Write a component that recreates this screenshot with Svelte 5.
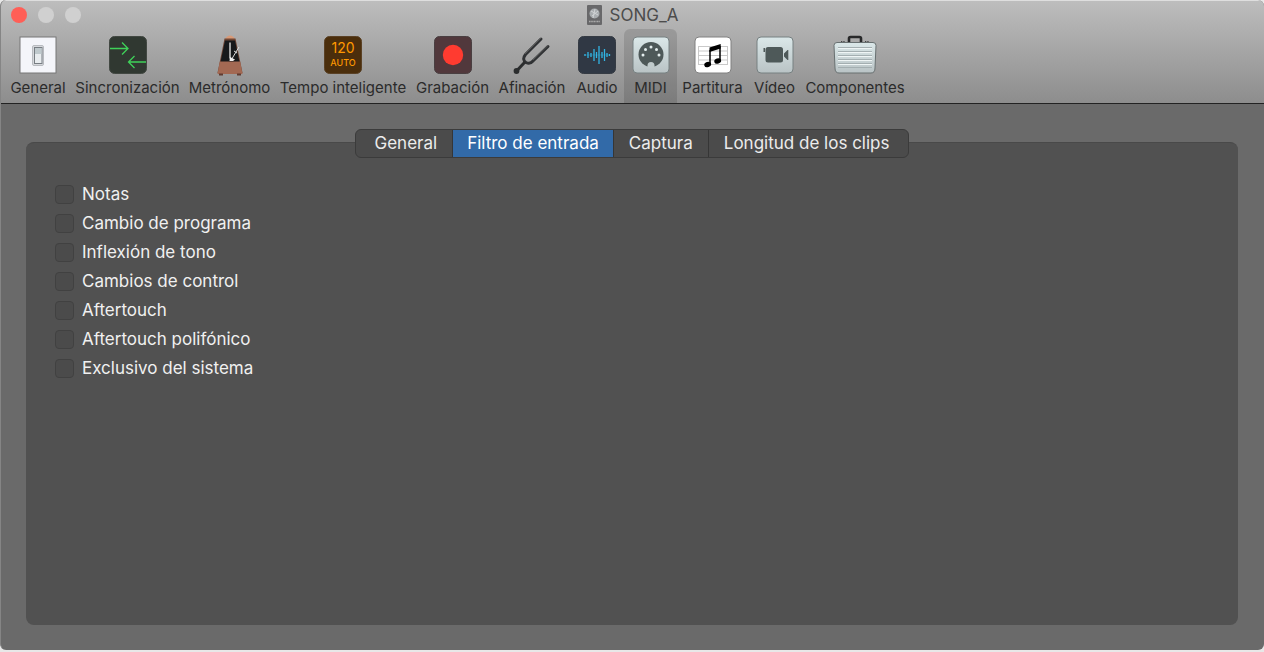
<script>
  const tools = ['General', 'Sincronización', 'Metrónomo', 'Tempo inteligente', 'Grabación', 'Afinación', 'Audio', 'MIDI', 'Partitura', 'Vídeo', 'Componentes'];
  const tabs = ['General', 'Filtro de entrada', 'Captura', 'Longitud de los clips'];
  const filters = ['Notas', 'Cambio de programa', 'Inflexión de tono', 'Cambios de control', 'Aftertouch', 'Aftertouch polifónico', 'Exclusivo del sistema'];
  const wave = [[27, 1], [30, 3], [33, 2], [36, 6], [38.5, 3], [41, 9], [44, 3], [46.5, 6], [49, 2], [51.5, 1]];

  let tool = $state('MIDI');
  let tab = $state('Filtro de entrada');
  let checked = $state(filters.map(() => false));
</script>

<svelte:head><title>SONG_A</title></svelte:head>

<div class="window">
  <header>
    <div class="titlebar">
      <div class="lights">
        <button class="light close" aria-label="Cerrar"></button>
        <button class="light" aria-label="Minimizar" disabled></button>
        <button class="light" aria-label="Ampliar" disabled></button>
      </div>
      <h1>
        <svg width="15" height="20" viewBox="0 0 15 20" aria-hidden="true">
          <rect width="15" height="20" rx="1" fill="#68686a" />
          <circle cx="7.5" cy="8.5" r="5" fill="#a9adb0" />
          <path d="M4 6l7 4M8 4l-2 9M11 6l-6 5" stroke="#d0d3d5" stroke-width="1" />
          <path d="M2 16.5h11" stroke="#aaa" stroke-width="1.6" stroke-dasharray="1.2 .4" />
        </svg>
        <span>SONG_A</span>
      </h1>
    </div>
    <nav class="toolbar" aria-label="Preferencias">
      {#each tools as name}
        <button class="tool" class:active={tool === name} aria-pressed={tool === name} onclick={() => (tool = name)}>
          <svg width="44" height="42" viewBox="0 0 44 42" aria-hidden="true">
            {#if name === 'General'}
              <rect x="4" y="3" width="36" height="36" fill="#f4f5fa" stroke="#777" />
              <rect x="16.5" y="11.500" width="11" height="20" rx="1.500" fill="#d6d8dc" stroke="#b8bbc0" />
              <rect x="18.500" y="13.500" width="7.500" height="16" fill="#e8ecef" stroke="#777d83" />
              <rect x="19" y="14" width="6.500" height="6" fill="#bfc9cd" />
            {:else if name === 'Sincronización'}
              <rect x="3.500" y="2.500" width="37" height="37" rx="5" fill="#303831" stroke="#424842" />
              <path d="M4 14.500h17.500M16 8.500l6 6-6 6M40 28H23M28.500 22l-6 6 6 6" fill="none" stroke="#3fd159" stroke-width="1.300" />
            {:else if name === 'Metrónomo'}
              <path d="M17 5q2-3.500 5-3.500T27 5z" fill="#d99b79" />
              <path d="M16.500 4.500h11L34.500 39h-25z" fill="#6f4635" />
              <path d="M17 6.500h10l4.500 21.500h-19z" fill="#17191b" />
              <path d="M11.800 27.500h20.400L34.500 40h-25z" fill="#a36953" />
              <path d="M11 39.500h4v2h-4zM29 39.500h4v2h-4z" fill="#603b30" />
              <path d="M22 8.500v16" stroke="#a2a2a2" stroke-width="2" />
              <path d="M23.500 25.500L31 13" stroke="#ddd" stroke-width="1" />
              <path d="M26 17l3 2" stroke="#ddd" stroke-width="1" />
              <path d="M22 23l5 2.500-2 1.500h-3.500z" fill="#eee" />
            {:else if name === 'Tempo inteligente'}
              <rect x="3.500" y="2.500" width="37" height="37" rx="5" fill="#4b2e0c" stroke="#5a4125" />
              <text x="22" y="19" text-anchor="middle" font-size="14" fill="#ff9800">120</text>
              <text x="22" y="32" text-anchor="middle" font-size="9" font-weight="500" fill="#ff9800">AUTO</text>
            {:else if name === 'Grabación'}
              <rect x="3.500" y="2.500" width="37" height="37" rx="5" fill="#51383c" stroke="#493f41" />
              <circle cx="22" cy="21" r="10.200" fill="#ff3b30" />
            {:else if name === 'Afinación'}
              <path d="M31 5L15.500 20.500q-4 5 .5 8 4 2 7-1.500L38 12.500" fill="none" stroke="#303234" stroke-width="3" stroke-linecap="round" />
              <path d="M31 4L15 20M38 11.500L23 26" stroke="#666" stroke-width=".7" />
              <path d="M15 28l-8 8.500" stroke="#2b2d2e" stroke-width="3" />
              <circle cx="6.500" cy="37" r="2.900" fill="#2b2d2e" />
            {:else if name === 'Audio'}
              <rect x="3.500" y="2.500" width="37" height="37" rx="5" fill="#303844" stroke="#353b43" />
              <path d="M9.500 21h25.500" stroke="#278eb3" stroke-width=".5" />
              {#each wave as [x, r]}
                <path d={`M${x - 17} ${21 - r}v${r * 2}`} stroke="#32b5e5" stroke-width="1.300" />
              {/each}
            {:else if name === 'MIDI'}
              <rect x="4" y="3" width="36" height="36" rx="4" fill="url(#glass)" stroke="#778081" />
              <circle cx="22" cy="20.500" r="12.500" fill="#4e5959" />
              <path d="M18.500 34v-2.500a3.500 3.500 0 0 1 7 0V34z" fill="#c0cbcc" />
              <g fill="#e4eeee"><circle cx="14" cy="21" r="1.500" /><circle cx="16.500" cy="15.500" r="1.500" /><circle cx="22" cy="13" r="1.500" /><circle cx="27.500" cy="15.500" r="1.500" /><circle cx="30" cy="21" r="1.500" /></g>
            {:else if name === 'Partitura'}
              <rect x="4" y="3" width="36" height="36" rx="4" fill="#fff" stroke="#808080" />
              <path d="M7 12.500h30M7 17h30M7 21.500h30M7 26h30M7 30.500h30M7.500 12.500v18M36.500 12.500v18" stroke="#c9c9c9" fill="none" />
              <path d="M19 16l10-3v14M19 16v14" fill="none" stroke="#000" stroke-width="1.500" />
              <path d="M18.500 13.500L29.700 10v4.500L18.500 18z" fill="#000" />
              <ellipse cx="16.700" cy="30.500" rx="3.500" ry="2.600" transform="rotate(-20 16.700 30.500)" />
              <ellipse cx="26.700" cy="27" rx="3.500" ry="2.600" transform="rotate(-20 26.700 27)" />
            {:else if name === 'Vídeo'}
              <rect x="4" y="3" width="36" height="36" rx="4" fill="url(#glass)" stroke="#778081" />
              <rect x="12.500" y="13" width="17.500" height="15.500" rx="2.500" fill="#4e5959" />
              <path d="M31 19.500l3.500-3.500h.8v10h-.8L31 22.500zM10.500 14h1.500v4h-1.500z" fill="#4e5959" />
            {:else}
              <path d="M16 9V4.500q0-1.500 1.500-1.500h9q1.500 0 1.500 1.500V9" fill="none" stroke="#28292a" stroke-width="2.600" />
              <path d="M8 8h4M32 8h4" stroke="#444" stroke-width="2" stroke-dasharray="1 .7" />
              <path d="M4 8.500h36q3 0 3 3L42 34q0 5-4 5H6q-4 0-4-5L1 11.500q0-3 3-3z" fill="url(#glass)" stroke="#687071" />
              <path d="M5 13.500h34M5 17.500h34M5 21.500h34M5 25.500h34M5 29.500h34M5 33.500h34" stroke="#a4afb1" />
              <path d="M5 14.500h34M5 18.500h34M5 22.500h34M5 26.500h34M5 30.500h34" stroke="#eff5f5" />
            {/if}
          </svg>
          <span>{name}</span>
        </button>
      {/each}
    </nav>
  </header>

  <svg class="defs" width="0" height="0" aria-hidden="true">
    <defs><linearGradient id="glass" x2="0" y2="1"><stop stop-color="#dbe8e9" /><stop offset="1" stop-color="#b9c3c5" /></linearGradient></defs>
  </svg>

  <main>
    <div class="tabs" role="tablist">
      {#each tabs as name}
        <button role="tab" aria-selected={tab === name} onclick={() => (tab = name)}>{name}</button>
      {/each}
    </div>
    <section>
      {#each filters as name, i}
        <label><input type="checkbox" bind:checked={checked[i]} /><span>{name}</span></label>
      {/each}
    </section>
  </main>
</div>

<style>
  :global(body) { margin: 0; background: #e8e8e8; }
  .window {
    box-sizing: border-box;
    display: flex;
    flex-direction: column;
    min-height: calc(100vh - 2px);
    border-left: 1px solid #858585;
    border-radius: 6px;
    overflow: hidden;
    background: #6a6a6a;
    font-family: Inter, "Liberation Sans", sans-serif;
  }
  button { border: 0; padding: 0; margin: 0; background: none; font: inherit; color: inherit; }
  header {
    border-top: 1px solid #dedede;
    border-bottom: 1px solid #222;
    background: linear-gradient(#bdbdbd, #8d8d8d);
  }
  .titlebar { display: grid; grid-template-columns: 1fr auto 1fr; align-items: center; height: 28px; }
  .lights { display: flex; gap: 11px; padding-left: 10px; }
  .light { width: 16px; height: 16px; border-radius: 50%; background: #d0d0d0; }
  .close { background: #ff5f57; }
  h1 { display: flex; align-items: center; gap: 8px; margin: 0; font-size: 17px; line-height: 20px; font-weight: 400; color: #4c4c4c; }
  .toolbar {
    display: grid;
    grid-template-columns: 66px 113px 91px 136px 83px 76px 54px 53px 71px 53px 108px;
    padding-left: 4px;
  }
  .tool {
    display: flex;
    flex-direction: column;
    align-items: center;
    gap: 3px;
    height: 74px;
    padding-top: 5px;
    border-radius: 6px 6px 0 0;
    font-size: 15px;
    line-height: 18px;
    color: #2b2b2b;
    white-space: nowrap;
  }
  .tool svg { flex: none; }
  .active { background: rgb(0 0 0 / 12%); }
  .defs { display: block; }
  main { flex: 1; display: flex; flex-direction: column; align-items: center; padding: 25px 26px 25px 25px; }
  .tabs { display: flex; position: relative; z-index: 1; border: 1px solid #3b3b3b; border-radius: 6px; overflow: hidden; background: #4b4b4b; }
  .tabs button { height: 27px; padding: 0 15px; font-size: 17px; line-height: 27px; color: #ececec; white-space: nowrap; }
  .tabs button + button { border-left: 1px solid #363636; }
  .tabs button:first-child { padding-left: 19px; }
  .tabs button:last-child { padding-right: 19px; }
  .tabs button[aria-selected="true"] { padding: 0 14px; background: #326aa8; color: #fff; }
  section {
    box-sizing: border-box;
    flex: 1;
    align-self: stretch;
    margin-top: -16px;
    padding: 37px 29px;
    border-top: 1px solid #494949;
    border-radius: 8px;
    background: #515151;
  }
  label { display: flex; align-items: center; gap: 8px; height: 29px; width: fit-content; font-size: 17px; line-height: 29px; color: #f0f0f0; }
  input { appearance: none; box-sizing: border-box; width: 19px; height: 19px; margin: 0; border: 1px solid #414141; border-radius: 4px; background: #4b4b4b; }
  input:checked { background: #326aa8; }
</style>
